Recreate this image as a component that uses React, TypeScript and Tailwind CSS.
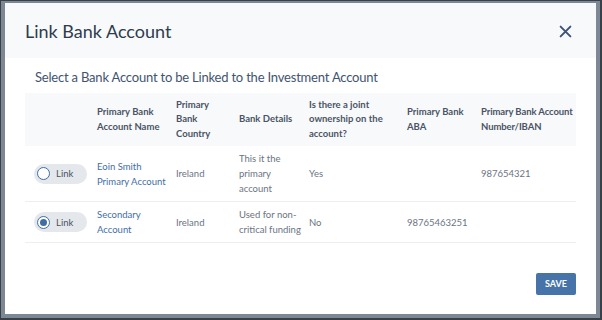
import React from "react";

const rows = [
    { checked: false, name: ["Eoin Smith", "Primary Account"], country: "Ireland", details: ["This it the", "primary", "account"], joint: "Yes", aba: "", iban: "987654321" },
    { checked: true, name: ["Secondary", "Account"], country: "Ireland", details: ["Used for non-", "critical funding"], joint: "No", aba: "98765463251", iban: "" },
];

function LinkPill({ checked }: { checked: boolean }) {
    return (
        <div className="flex items-center gap-[6px] w-[53px] h-[20px] rounded-full bg-[#e4e7eb] pl-[3px]">
            <span className="w-[13px] h-[13px] rounded-full border-[1.5px] border-[#3f6ea6] flex items-center justify-center bg-white">
                {checked && <span className="w-[7px] h-[7px] rounded-full bg-[#3f6ea6]" />}
            </span>
            <span className="text-[9.5px] text-[#4a5361]">Link</span>
        </div>
    );
}

export default function App() {
    return (
        <div className="w-[602px] h-[320px] bg-[#3b4047] p-[1px] pb-[2px] pr-[2px]" style={{ fontFamily: "Lato, 'Open Sans', sans-serif" }}>
            <div className="w-full h-full bg-[#7d8896] pl-[4px] pt-[2px] pr-[4px] pb-[4px]">
                <div className="w-full h-full bg-white flex flex-col">
                    {/* header */}
                    <div className="h-[55px] bg-[#f8f9fb] flex items-center justify-between pl-[20px] pr-[24px] shrink-0">
                        <h1 className="text-[18px] text-[#2f3c4e] pt-[1px]">Link Bank Account</h1>
                        <svg width="13" height="13" viewBox="0 0 12 12" className="mt-[1px]">
                            <path d="M1.5 1.5 L10.5 10.5 M10.5 1.5 L1.5 10.5" stroke="#3b5573" strokeWidth="1.8" strokeLinecap="round" />
                        </svg>
                    </div>

                    <div className="px-[20px]">
                        <p className="pl-[10px] pt-[8px] pb-[5px] text-[13px] leading-[22px] text-[#3f5470] tracking-[-0.2px]">
                            Select a Bank Account to be Linked to the Investment Account
                        </p>

                        <table className="table-fixed w-[551px] border-collapse text-[9.5px]">
                            <colgroup>
                                <col className="w-[72px]" />
                                <col className="w-[79px]" />
                                <col className="w-[63px]" />
                                <col className="w-[70px]" />
                                <col className="w-[98px]" />
                                <col className="w-[74px]" />
                                <col className="w-[95px]" />
                            </colgroup>
                            <thead>
                                <tr className="bg-[#f8f9fb] h-[53px] text-[#4a5466] font-bold leading-[14.5px] text-left">
                                    <th></th>
                                    <th className="pr-2">Primary Bank Account Name</th>
                                    <th className="pr-2">Primary Bank Country</th>
                                    <th className="pr-2">Bank Details</th>
                                    <th className="pr-2">Is there a joint ownership on the account?</th>
                                    <th className="pr-2">Primary Bank ABA</th>
                                    <th className="tracking-[-0.1px]">Primary Bank Account Number/IBAN</th>
                                </tr>
                            </thead>
                            <tbody className="text-[#6b7482] leading-[15px]">
                                {rows.map((r, i) => (
                                    <tr key={i} className="border-b-[1.5px] border-[#eceef1]">
                                        <td className="py-[5px] pl-[9px]"><LinkPill checked={r.checked} /></td>
                                        <td className="py-[5px] text-[#3f6ea6]">{r.name.map((l) => <div key={l}>{l}</div>)}</td>
                                        <td className="py-[5px]">{r.country}</td>
                                        <td className="py-[5px]">{r.details.map((l) => <div key={l}>{l}</div>)}</td>
                                        <td className="py-[5px]">{r.joint}</td>
                                        <td className="py-[5px]">{r.aba}</td>
                                        <td className="py-[5px]">{r.iban}</td>
                                    </tr>
                                ))}
                            </tbody>
                        </table>

                        <div className="flex justify-end pt-[30px]">
                            <button className="w-[40px] h-[22px] rounded-[2px] bg-[#4673a8] text-white text-[9px] font-bold">SAVE</button>
                        </div>
                    </div>
                </div>
            </div>
        </div>
    );
}
